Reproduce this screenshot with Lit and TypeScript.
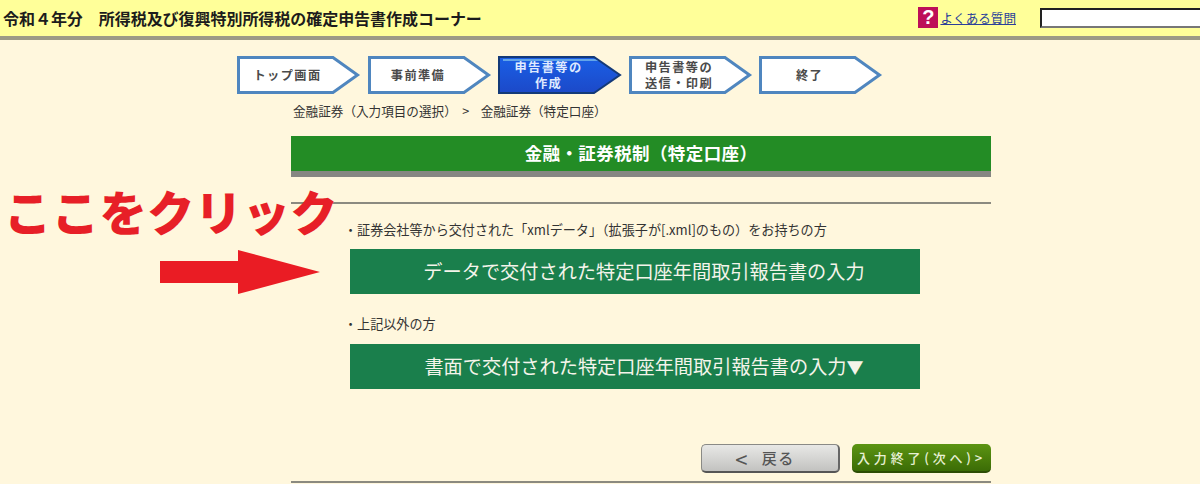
import { LitElement, html, css, svg } from "lit";
import { customElement } from "lit/decorators.js";

const steps = [
  { label: ["トップ画面"], active: false },
  { label: ["事前準備"], active: false },
  { label: ["申告書等の", "作成"], active: true },
  { label: ["申告書等の", "送信・印刷"], active: false },
  { label: ["終了"], active: false },
];

const arrowShape = svg`<svg class="shape" width="124" height="38" viewBox="0 0 124 38">
  <polygon points="1.5,1.5 96,1.5 120.5,19 96,36.5 1.5,36.5" fill="#fff" stroke="#4f86bf" stroke-width="3"/>
</svg>`;
const activeShape = svg`<svg class="shape" width="124" height="38" viewBox="0 0 124 38">
  <defs><linearGradient id="g" x1="0" y1="0" x2="0" y2="1"><stop offset="0" stop-color="#1a5fe6"/><stop offset="1" stop-color="#1c49c8"/></linearGradient></defs>
  <polygon points="1,1 96,1 122,19 96,37 1,37" fill="url(#g)" stroke="#143a78" stroke-width="2"/>
  <polygon points="5,3 97,3 100,5 5,5" fill="#63a5e8"/>
</svg>`;

@customElement("app-root")
export class AppRoot extends LitElement {
  static styles = css`
    :host { display: block; width: 1200px; height: 484px; overflow: hidden; position: relative; background: #fff7dd;
      font-family: "Noto Sans CJK JP", "Noto Sans", sans-serif; color: #333; }
    .header { height: 36px; background: #ffff99; border-bottom: 4px solid #9c9a85; display: flex; align-items: center; }
    .title { margin-left: 3px; font-size: 16px; font-weight: 700; color: #1c1c1c; line-height: 32px; height: 32px; white-space: pre; flex: none; letter-spacing: -.04px; }
    .help { margin-left: auto; display: flex; align-items: center; gap: 2px; height: 36px; padding-bottom: 1px; box-sizing: border-box; }
    .q { width: 20px; height: 21px; background: #bd0f58; color: #fff; font: 700 20px/21px "Liberation Sans", sans-serif; text-align: center; }
    .help a { font-size: 12.6px; line-height: 20px; color: #2b3f9a; text-decoration: underline; }
    .search { margin-left: 24px; width: 160px; height: 20px; box-sizing: border-box; background: #fff; border: 2px solid #222; border-right: 0; border-bottom-color: #777; margin-bottom: 1px; }
    .steps { display: flex; gap: 8.5px; padding: 16px 0 0 237px; height: 38px; }
    .step { position: relative; width: 122px; height: 38px; flex: none; display: flex; align-items: center; justify-content: center;
      box-sizing: border-box; padding-right: 21px; font-size: 12.2px; font-weight: 700; color: #4a4a4a; line-height: 16px; text-align: center; letter-spacing: 1.4px; white-space: nowrap; }
    .step.active { color: #dfeaff; }
    .shape { position: absolute; left: 0; top: 0; }
    .label { position: relative; }
    .crumb { margin: 2px 0 0 293px; font-size: 12.6px; line-height: 30px; height: 30px; color: #333; white-space: pre; }
    .content { margin-left: 291px; width: 700px; padding-top: 10px; }
    .banner { height: 35px; background: #238c25; border-bottom: 6px solid #868682; color: #fff; font-size: 17.5px; font-weight: 700; line-height: 33px; text-align: center; letter-spacing: .4px; }
    .rule { height: 2px; background: #8b8a80; margin-top: 25px; }
    .note { font-size: 13.1px; line-height: 18px; height: 18px; margin-left: 53px; color: #333; white-space: pre; }
    .note.first { margin-top: 17px; }
    .note.two { margin-top: 21px; }
    .btn { margin: 10px 0 0 59px; width: 570px; height: 45px; box-sizing: border-box; padding-left: 18px; background: #1a7f4c; color: #f4f4ea; font-size: 19.2px; line-height: 45px; text-align: center; white-space: nowrap; }
    .btn.second { margin-top: 11px; }
    .tri { font-size: 17px; }
    .actions { display: flex; gap: 12px; margin: 55px 0 0 410px; }
    .back, .next { width: 139px; height: 29px; box-sizing: border-box; border-radius: 5px; text-align: center; font-weight: 500; line-height: 28px; white-space: pre; }
    .back { display: flex; justify-content: center; align-items: center; gap: 13px; padding-right: 10px; background: linear-gradient(#e8e8e6, #c2c2c0); border: 1px solid #8a8a86; border-bottom: 2px solid #555; border-right: 2px solid #666; color: #555; letter-spacing: 1.5px; font-size: 15px; line-height: 26px; }
    .lt { font-size: 22px; font-weight: 400; line-height: 26px; }
    .next { background: linear-gradient(#5c9412, #3b6c06); border-bottom: 2px solid #2c4d04; color: #e7f0d4; letter-spacing: 3.8px; font-size: 13px; }
    .foot { height: 2px; background: #8b8a80; margin-top: 8px; }
    .callout { position: absolute; left: 4px; top: 178px; font-size: 47.5px; line-height: 66px; font-weight: 900; color: #e71f27; white-space: pre; letter-spacing: .2px; }
    .arrow { position: absolute; left: 160px; top: 250px; }
  `;

  render() {
    return html`
      <div class="header">
        <div class="title">令和４年分　所得税及び復興特別所得税の確定申告書作成コーナー</div>
        <div class="help"><span class="q">?</span><a href="#">よくある質問</a></div>
        <div class="search"></div>
      </div>
      <div class="steps">
        ${steps.map(
          (s) => html`<div class="step ${s.active ? "active" : ""}">
            ${s.active ? activeShape : arrowShape}
            <div class="label">${s.label.map((l) => html`<div>${l}</div>`)}</div>
          </div>`
        )}
      </div>
      <div class="crumb">金融証券（入力項目の選択）  &gt;    金融証券（特定口座）</div>
      <div class="content">
        <div class="banner">金融・証券税制（特定口座）</div>
        <div class="rule"></div>
        <div class="note first">・証券会社等から交付された「xmlデータ」（拡張子が[.xml]のもの）をお持ちの方</div>
        <div class="btn">データで交付された特定口座年間取引報告書の入力</div>
        <div class="note two">・上記以外の方</div>
        <div class="btn second">書面で交付された特定口座年間取引報告書の入力<span class="tri">▼</span></div>
        <div class="actions">
          <div class="back"><span class="lt">&lt;</span><span>戻る</span></div>
          <div class="next">入力終了(次へ)&gt;</div>
        </div>
        <div class="foot"></div>
      </div>
      <div class="callout">ここをクリック</div>
      <svg class="arrow" width="160" height="44" viewBox="0 0 160 44">
        <polygon points="0,11 78,11 78,0 160,22 78,44 78,33 0,33" fill="#ea1c24"/>
      </svg>
    `;
  }
}
